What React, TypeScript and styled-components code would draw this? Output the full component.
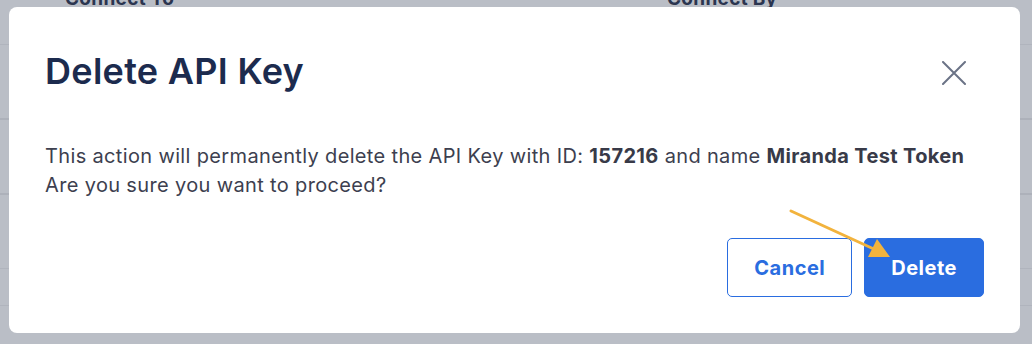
import React from "react";
import styled, { createGlobalStyle } from "styled-components";

const GlobalStyle = createGlobalStyle`
  html, body {
    margin: 0;
    padding: 0;
    background: #babec6;
    font-family: Inter, "Noto Sans", sans-serif;
  }
`;

const Page = styled.div`
  position: relative;
  width: 1032px;
  height: 344px;
  overflow: hidden;
  background: #babec6;
`;

// table that sits behind the dimmed overlay
const Table = styled.div`
  display: flex;
  flex-direction: column;
`;

const Row = styled.div<{ $h: number; $thick?: boolean }>`
  height: ${(p) => p.$h}px;
  border-bottom: ${(p) => (p.$thick ? "2px solid #adb1ba" : "1px solid #b0b4bd")};
  box-sizing: border-box;
`;

const HeadRow = styled.div`
  display: flex;
  height: 45px;
  border-bottom: 1px solid #b0b4bd;
  box-sizing: border-box;
`;

const HeadCell = styled.div<{ $w: number }>`
  width: ${(p) => p.$w}px;
  margin-top: -13px;
  font-size: 19px;
  font-weight: 700;
  letter-spacing: 0.3px;
  color: #2b3550;
`;

const Modal = styled.div`
  position: absolute;
  left: 9px;
  top: 7px;
  width: 1011px;
  height: 326px;
  box-sizing: border-box;
  background: #fff;
  border-radius: 8px;
  padding: 42px 36px 36px 36px;
  display: flex;
  flex-direction: column;
`;

const Header = styled.div`
  display: flex;
  align-items: center;
  justify-content: space-between;
`;

const Title = styled.h2`
  margin: 0;
  font-size: 36px;
  line-height: 43px;
  font-weight: 600;
  letter-spacing: 0.3px;
  color: #1c2b4e;
`;

const CloseButton = styled.button`
  width: 40px;
  height: 40px;
  margin: 4px 10px 0 0;
  padding: 0;
  border: none;
  background: none;
  display: flex;
  align-items: center;
  justify-content: center;
  color: #6b7386;
  cursor: pointer;
`;

const Message = styled.p`
  margin: 49px 0 0;
  font-size: 20px;
  line-height: 29px;
  letter-spacing: 0.35px;
  color: #3d3f4f;

  b {
    font-weight: 700;
    color: #383a48;
  }
`;

const Footer = styled.div`
  margin-top: auto;
  display: flex;
  justify-content: flex-end;
  gap: 12px;
`;

const Button = styled.button<{ $primary?: boolean }>`
  height: 59px;
  padding: 0 26px;
  border-radius: 5px;
  font-family: Inter, "Noto Sans", sans-serif;
  font-size: 20px;
  font-weight: 700;
  letter-spacing: 0.5px;
  cursor: pointer;
  border: 1px solid #2a6de0;
  background: ${(p) => (p.$primary ? "#2a6de0" : "#fff")};
  color: ${(p) => (p.$primary ? "#fff" : "#2a6de0")};
`;

const Arrow = styled.svg`
  position: absolute;
  left: 0;
  top: 0;
  pointer-events: none;
`;

const App = () => (
  <Page>
    <GlobalStyle />
    <Table>
      <HeadRow>
        <HeadCell $w={65} />
        <HeadCell $w={602}>Connect To</HeadCell>
        <HeadCell $w={200}>Connect By</HeadCell>
      </HeadRow>
      <Row $h={75} $thick />
      <Row $h={75} $thick />
      <Row $h={74} />
      <Row $h={37} />
    </Table>

    <Modal>
      <Header>
        <Title>Delete API Key</Title>
        <CloseButton aria-label="Close">
          <svg width="24" height="24" viewBox="0 0 24 24" fill="none" stroke="currentColor" strokeWidth="2" strokeLinecap="round">
            <path d="M1 1L23 23M23 1L1 23" />
          </svg>
        </CloseButton>
      </Header>
      <Message>
        This action will permanently delete the API Key with ID: <b>157216</b> and name <b>Miranda Test Token</b>
        <br />
        Are you sure you want to proceed?
      </Message>
      <Footer>
        <Button>Cancel</Button>
        <Button $primary>Delete</Button>
      </Footer>
    </Modal>

    <Arrow width="1032" height="344" viewBox="0 0 1032 344">
      <line x1="791" y1="211" x2="876" y2="250" stroke="#f2b33d" strokeWidth="3" strokeLinecap="round" />
      <polygon points="890,257 868,257 877,239" fill="#f2b33d" />
    </Arrow>
  </Page>
);

export default App;
